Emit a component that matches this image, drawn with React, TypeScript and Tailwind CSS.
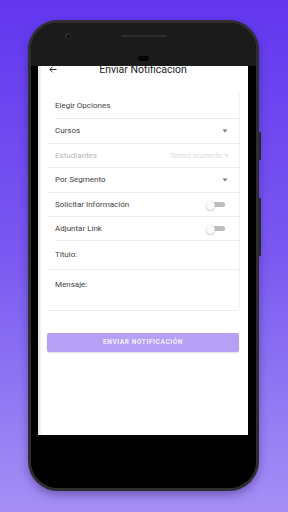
import React from "react";

const Caret = () => (
  <svg width="6" height="4" viewBox="0 0 6 4" className="mr-[1px]">
    <path d="M0.5 0.5 L5.5 0.5 L3 3.5 Z" fill="#7a7a7a" />
  </svg>
);

const Toggle = () => (
  <div className="relative flex h-[8px] w-[20px] items-center">
    <div className="ml-[6px] h-[5px] w-[13px] rounded-full bg-[#bdbdbd]" />
    <div className="absolute left-0 top-0 h-[9px] w-[9px] rounded-full bg-[#fafafa] shadow-[0_0.5px_1.5px_rgba(0,0,0,0.35)]" />
  </div>
);

const App: React.FC = () => {
  return (
    <div
      className="flex h-[512px] w-[288px] overflow-hidden bg-linear-to-b from-[#6336ef] via-[#7a58f1] to-[#a58ff5] pl-[28px] pt-[20px]"
      style={{ fontFamily: "Roboto, 'Liberation Sans', sans-serif" }}
    >
      {/* Phone */}
      <div className="relative h-[471px] w-[231px]">
        <div className="flex h-full w-full flex-col overflow-hidden rounded-[30px] border-[3px] border-[#2e2e2e] bg-black shadow-[0_4px_10px_rgba(30,0,80,0.35)]">
          {/* Top bezel */}
          <div className="flex h-[43px] flex-col bg-[#1b1b1b]">
            <div className="mt-[10px] flex items-center pl-[34px]">
              <div className="flex h-[6px] w-[6px] items-center justify-center rounded-full bg-[#2a2a2a]">
                <div className="h-[3px] w-[3px] rounded-full bg-[#0c0c0c]" />
              </div>
              <div className="ml-[50px] h-[2px] w-[46px] rounded-full bg-[#2c2c2c]" />
            </div>
            <div className="mx-auto mt-[17px] h-[5px] w-[11px] rounded-[3px] bg-[#050505]" />
          </div>

          {/* Screen */}
          <div className="ml-[7px] flex h-[369px] w-[210px] flex-col bg-white shadow-[inset_4px_0_3px_-2px_rgba(0,0,0,0.13)]">
            {/* Header */}
            <div className="relative -mt-[1px] flex h-[10px] items-center justify-center">
              <svg width="8" height="7" viewBox="0 0 8 7" className="absolute left-[11px] top-[1px]">
                <path d="M7.5 3.5 H1 M3.7 0.6 L0.8 3.5 L3.7 6.4" stroke="#333" strokeWidth="1" fill="none" />
              </svg>
              <span className="text-[10.5px] leading-none text-[#222]">Enviar Notificacion</span>
            </div>

            {/* Form */}
            <div className="ml-[9px] mt-[18px] mr-[8px] flex flex-col border-r border-[#f1f1f1] text-[8px] text-[#3f3f3f]">
              <div className="ml-[8px] flex h-[26px] items-center border-b border-[#ebebeb]">
                Elegir Opciones
              </div>
              <div className="flex h-[25px] items-center justify-between border-b border-[#ededed] pl-[8px] pr-[10px]">
                <span>Cursos</span>
                <Caret />
              </div>
              <div className="flex h-[24px] items-center justify-between border-b border-[#ededed] pl-[8px] pr-[10px]">
                <span className="text-[#b5b5b5]">Estudiantes</span>
                <span className="flex items-center gap-[2px] text-[7.5px] text-[#dcdcdc]">
                  Select students
                  <svg width="5" height="3" viewBox="0 0 6 4">
                    <path d="M0.5 0.5 L5.5 0.5 L3 3.5 Z" fill="#d6d6d6" />
                  </svg>
                </span>
              </div>
              <div className="flex h-[25px] items-center justify-between border-b border-[#ededed] pl-[8px] pr-[10px]">
                <span>Por Segmento</span>
                <Caret />
              </div>
              <div className="flex h-[24px] items-center justify-between border-b border-[#ededed] pl-[8px] pr-[13px]">
                <span>Solicitar Información</span>
                <Toggle />
              </div>
              <div className="ml-[8px] flex h-[24px] items-center justify-between border-b border-[#ededed] pr-[13px]">
                <span>Adjuntar Link</span>
                <Toggle />
              </div>
              <div className="flex h-[29px] items-center border-b border-[#ededed] pl-[8px]">
                Titulo:
              </div>
              <div className="h-[41px] border-b border-[#ededed] pl-[8px] pt-[9px]">Mensaje:</div>
            </div>

            {/* Button */}
            <div className="ml-[9px] mr-[9px] mt-[22px] flex h-[19px] items-center justify-center rounded-[2px] bg-[#b5a0f6] shadow-[0_1px_1.5px_rgba(0,0,0,0.12)]">
              <span className="text-[6.5px] font-bold tracking-[0.6px] text-[#f4f0ff]">
                ENVIAR NOTIFICACIÓN
              </span>
            </div>
          </div>

          {/* Bottom bezel */}
          <div className="flex-1 bg-black" />
        </div>

        {/* Side buttons */}
        <div className="absolute -right-[2px] top-[112px] h-[28px] w-[2px] rounded-r-[1px] bg-[#262626]" />
        <div className="absolute -right-[2px] top-[178px] h-[58px] w-[2px] rounded-r-[1px] bg-[#262626]" />
      </div>
    </div>
  );
};

export default App;
